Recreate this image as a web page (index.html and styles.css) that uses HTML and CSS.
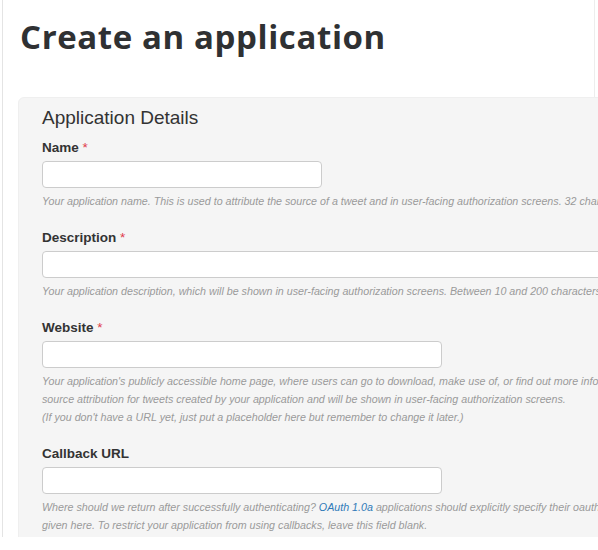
FILE: index.html
```html
<!DOCTYPE html>
<html>
<head>
<meta charset="utf-8">
<link rel="stylesheet" href="styles.css">
</head>
<body>
<div class="page">
  <div class="column">
    <h1 class="title">Create an application</h1>
    <div class="panel">
      <h2 class="panel-title">Application Details</h2>

      <div class="group">
        <label class="label">Name <span class="req">*</span></label>
        <input class="input input-name" type="text">
        <p class="help">Your application name. This is used to attribute the source of a tweet and in user-facing authorization screens. 32 characters max.</p>
      </div>

      <div class="group">
        <label class="label">Description <span class="req">*</span></label>
        <input class="input input-desc" type="text">
        <p class="help">Your application description, which will be shown in user-facing authorization screens. Between 10 and 200 characters max.</p>
      </div>

      <div class="group">
        <label class="label">Website <span class="req">*</span></label>
        <input class="input input-url" type="text">
        <p class="help">Your application's publicly accessible home page, where users can go to download, make use of, or find out more information about your application. This fully-qualified URL is used in the<br>source attribution for tweets created by your application and will be shown in user-facing authorization screens.<br>(If you don't have a URL yet, just put a placeholder here but remember to change it later.)</p>
      </div>

      <div class="group">
        <label class="label">Callback URL</label>
        <input class="input input-url" type="text">
        <p class="help">Where should we return after successfully authenticating? <a class="link" href="#">OAuth 1.0a</a> applications should explicitly specify their oauth_callback URL on the request token step, regardless of the value<br>given here. To restrict your application from using callbacks, leave this field blank.</p>
      </div>
    </div>
  </div>
</div>
</body>
</html>
```

FILE: styles.css
```css
html, body {
  margin: 0;
  padding: 0;
  background: #ffffff;
}

.page {
  width: 598px;
  height: 537px;
  overflow: hidden;
}

.column {
  margin-left: 2px;
  width: 593px;
  height: 537px;
  border-left: 1px solid #e4e4e4;
  border-right: 1px solid #ededed;
  padding-left: 15px;
  box-sizing: border-box;
}

.title {
  margin: 0;
  padding: 15px 0 0 2px;
  height: 97px;
  box-sizing: border-box;
  font-family: "Open Sans", "DejaVu Sans", sans-serif;
  font-weight: 700;
  font-size: 33px;
  line-height: 44px;
  color: #2f3133;
  letter-spacing: 0.6px;
}

.panel {
  width: 700px;
  height: 460px;
  background: #f5f5f5;
  border: 1px solid #efefef;
  border-radius: 6px;
  padding: 7px 0 0 23px;
  box-sizing: border-box;
  font-family: "Liberation Sans", Arial, sans-serif;
  overflow: hidden;
}

.panel-title {
  margin: 0 0 5px 0;
  font-weight: 400;
  font-size: 19px;
  line-height: 26px;
  color: #333333;
}

.group {
  display: flex;
  flex-direction: column;
  align-items: flex-start;
  margin-bottom: 16px;
}

.label {
  display: block;
  font-weight: 700;
  font-size: 13.5px;
  line-height: 20px;
  color: #333333;
  padding-top: 2px;
  margin-bottom: 3px;
}

.req {
  color: #e0394a;
  font-weight: 400;
}

.input {
  display: block;
  height: 27px;
  box-sizing: border-box;
  border: 1px solid #cccccc;
  border-radius: 4px;
  background: #ffffff;
  margin: 0;
  padding: 0 8px;
}

.input-name { width: 280px; }
.input-desc { width: 640px; }
.input-url { width: 400px; }

.help {
  margin: 4px 0 0 0;
  font-style: italic;
  font-size: 10.7px;
  line-height: 18px;
  color: #9a9a9a;
  white-space: nowrap;
}

.link {
  color: #2f7ab8;
  text-decoration: none;
}
```
